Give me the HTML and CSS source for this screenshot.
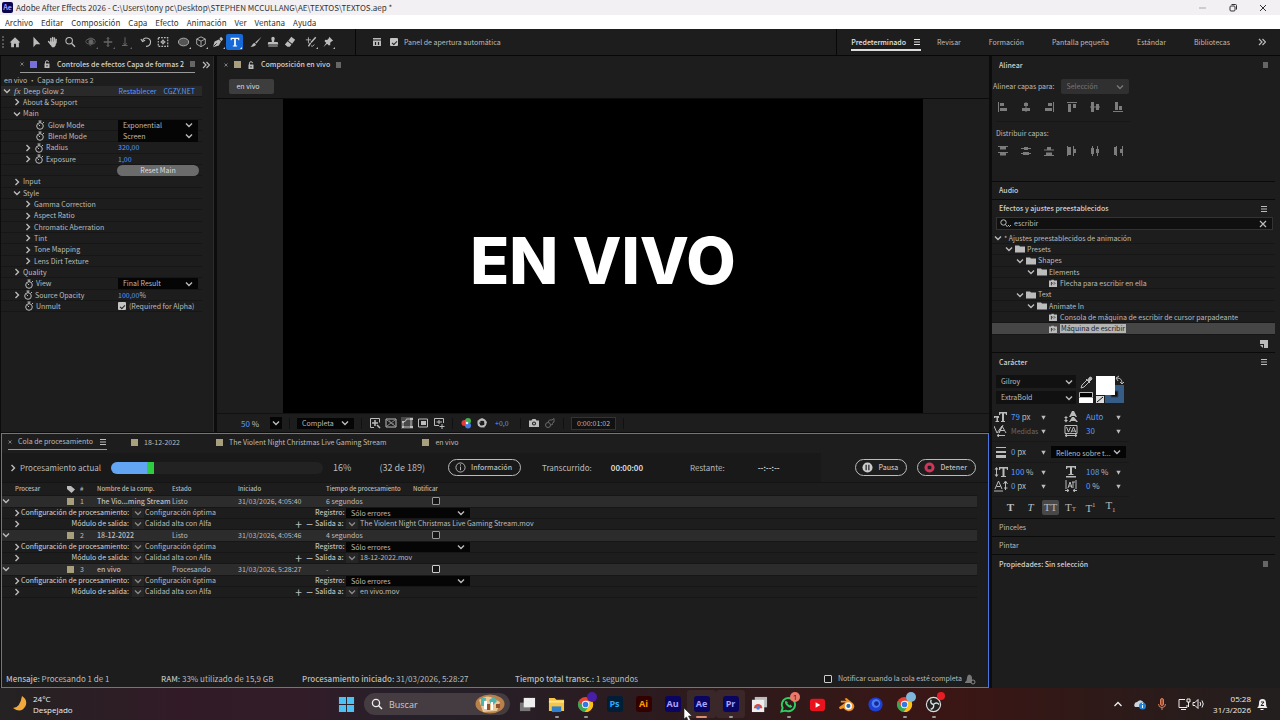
FILE: index.html
```
<!DOCTYPE html>
<html lang="es">
<head>
  <meta charset="UTF-8">
  <meta name="viewport" content="width=device-width, initial-scale=1.0">
  <title>Adobe After Effects 2026</title>
  <link rel="stylesheet" href="styles.css">
</head>
<body>
  <svg class="defs" width="0" height="0" aria-hidden="true">
    <symbol id="down" viewBox="0 0 8 8"><path d="M1 2.5 4 5.5 7 2.5" fill="none" stroke="currentColor" stroke-width="1.4"/></symbol>
    <symbol id="right" viewBox="0 0 8 8"><path d="M2.5 1 5.5 4 2.5 7" fill="none" stroke="currentColor" stroke-width="1.4"/></symbol>
    <symbol id="tri" viewBox="0 0 8 8"><path d="M1.5 2h5L4 6.500z" fill="currentColor"/></symbol>
    <symbol id="menu" viewBox="0 0 8 8"><path d="M1 1.500h6M1 4h6M1 6.500h6" stroke="currentColor" stroke-width="1"/></symbol>
    <symbol id="more" viewBox="0 0 8 8"><path d="M1 1 4 4 1 7M4.500 1l3 3-3 3" fill="none" stroke="currentColor" stroke-width="1.200"/></symbol>
    <symbol id="close" viewBox="0 0 8 8"><path d="M1 1l6 6M7 1 1 7" stroke="currentColor" stroke-width="1.200"/></symbol>
    <symbol id="lock" viewBox="0 0 8 8"><path d="M2.500 4V2.200a1.500 1.500 0 0 1 3 0" fill="none" stroke="currentColor"/><path d="M1.500 3.500h5V8h-5z" fill="currentColor"/><path d="M4 5v1.500" stroke="#1d1d1d"/></symbol>
    <symbol id="watch" viewBox="0 0 10 10"><circle cx="5" cy="6" r="3.300" fill="none" stroke="currentColor"/><path d="M3.500 1h3M5 1v2M5 6 3.500 4.500M8 2l1 1" stroke="currentColor" fill="none"/></symbol>
    <symbol id="folder" viewBox="0 0 10 8"><path d="M0 .5h4l1 1h5v6H0z" fill="currentColor"/></symbol>
    <symbol id="preset" viewBox="0 0 10 10"><path d="M0 2h3V1h3v1h4v8H0z" fill="currentColor"/><path d="M3 8V4l2 2M6 4l1.500 1.500L6 7" stroke="#1d1d1d" fill="none"/></symbol>
    <symbol id="search" viewBox="0 0 12 12"><circle cx="5" cy="5" r="3.600" fill="none" stroke="currentColor" stroke-width="1.300"/><path d="M7.500 7.500 11 11" stroke="currentColor" stroke-width="1.500"/></symbol>
    <symbol id="find" viewBox="0 0 12 10"><circle cx="3.500" cy="3.500" r="2.700" fill="none" stroke="currentColor"/><path d="m5.500 5.500 2 2.500M8 6l1.500 1.500L11 6" fill="none" stroke="currentColor"/></symbol>
    <symbol id="chrome" viewBox="0 0 18 18"><circle cx="9" cy="9" r="8" fill="#ea4335"/><path d="M2.100 5A8 8 0 0 0 8 16.900L12.500 11 5.500 11z" fill="#34a853"/><path d="M8 16.900A8 8 0 0 0 16 5H9l3.500 6z" fill="#fbc116"/><circle cx="9" cy="9" r="3.900" fill="#fff"/><circle cx="9" cy="9" r="3" fill="#3478e5"/></symbol>
  </svg>

  <header class="titlebar">
    <span class="app-badge">Ae</span>
    <span class="title">Adobe After Effects 2026 - C:\Users\tony pc\Desktop\STEPHEN MCCULLANG\AE\TEXTOS\TEXTOS.aep *</span>
    <div class="window-buttons">
      <button aria-label="Minimizar"><svg viewBox="0 0 10 10"><path d="M1 5h7" stroke="#aaa"/></svg></button>
      <button aria-label="Restaurar"><svg viewBox="0 0 10 10" fill="none" stroke="#333"><rect x="2" y="3" width="5" height="5" rx="1"/><path d="M3.500 1.500h4q1 0 1 1v4"/></svg></button>
      <button aria-label="Cerrar"><svg viewBox="0 0 10 10"><path d="M2 2l6 6M8 2 2 8" stroke="#333"/></svg></button>
    </div>
  </header>

  <nav class="menubar">
    <button>Archivo</button><button>Editar</button><button>Composición</button><button>Capa</button><button>Efecto</button><button>Animación</button><button>Ver</button><button>Ventana</button><button>Ayuda</button>
  </nav>

  <div class="toolbar">
    <span class="grip"></span>
    <div class="tools">
      <div class="tool-group">
        <button aria-label="Inicio"><svg viewBox="0 0 14 14"><path d="M7 1.500.8 7.500h1.700V13h3.300V9h2.400v4h3.300V7.500h1.700z" fill="currentColor"/></svg></button>
      </div>
      <div class="tool-group">
        <button aria-label="Selección"><svg viewBox="0 0 14 14"><path d="M4 1v12l3-3.500h5z" fill="currentColor"/></svg></button>
        <button aria-label="Mano"><svg viewBox="0 0 14 14" fill="none" stroke="currentColor" stroke-linecap="round"><path d="M4.500 3v5M6.600 1.800v5M8.700 2.200V8M10.700 4l-.4 4M1.800 6.500 4 9" stroke-width="1.700"/><path d="M4 6.500h7l-1 4.500-1.500 2H6L3.500 9.500z" fill="currentColor" stroke="none"/></svg></button>
        <button aria-label="Zoom"><svg viewBox="0 0 14 14" fill="none" stroke="currentColor"><circle cx="6" cy="5.500" r="3.800" stroke-width="1.200"/><path d="m8.800 8.500 4 4" stroke-width="1.600"/></svg></button>
      </div>
      <div class="tool-group dim">
        <button class="sub" aria-label="Órbita"><svg viewBox="0 0 14 14" fill="none" stroke="currentColor"><ellipse cx="6.500" cy="6.500" rx="5.500" ry="3"/><circle cx="7" cy="7" r="2.500" fill="currentColor"/><path d="M3 4.500C5 1.500 9 2 11 4.500M5 10l2 2"/></svg></button>
        <button class="sub" aria-label="Desplazar"><svg viewBox="0 0 14 14" fill="none" stroke="currentColor"><path d="M7 2v10M2 7h10" stroke-width="1.500"/><path d="m5.500 3.500 1.500-2 1.500 2M5.500 10.500l1.500 2 1.500-2"/></svg></button>
        <button class="sub" aria-label="Acercar"><svg viewBox="0 0 14 14" fill="none" stroke="currentColor"><path d="M7 1.500v9M3.500 11H10" stroke-width="1.200"/><path d="M5 8.500 7 11l2-2.500"/></svg></button>
      </div>
      <div class="tool-group">
        <button aria-label="Rotación"><svg viewBox="0 0 14 14" fill="none" stroke="currentColor"><path d="M3 5.500A4.800 4.800 0 1 1 7 12" stroke-width="1.300"/><path d="M1 3.500 3 6.500l3-1.500" stroke-width="1.300"/></svg></button>
        <button aria-label="Punto de ancla"><svg viewBox="0 0 14 14" fill="none" stroke="currentColor"><rect x="1.500" y="2" width="11" height="10" stroke-dasharray="2 1.300" stroke-width="1.400"/><circle cx="7" cy="7" r="1.800"/><path d="M7 4v6M4 7h6"/></svg></button>
      </div>
      <div class="tool-group">
        <button class="sub" aria-label="Elipse"><svg viewBox="0 0 14 14"><ellipse cx="6.500" cy="7" rx="6" ry="4.500" fill="#555" stroke="currentColor"/></svg></button>
        <button class="sub" aria-label="Cubo"><svg viewBox="0 0 14 14" fill="none" stroke="currentColor"><path d="M7 1 12 3.500v6L7 12.500 2 9.500v-6zM2 3.500 7 6l5-2.500M7 6v6.500"/></svg></button>
        <button class="sub" aria-label="Pluma"><svg viewBox="0 0 14 14"><path d="M1 13 3 6.500 8 4l2.500 2.500L8 11zM8.500 3.500l2-2.500L13 3.500l-2 2.500z" fill="currentColor"/><path d="m1.500 12.500 4-4" stroke="#1d1d1d"/></svg></button>
        <button class="sub active" aria-label="Texto"><svg viewBox="0 0 14 14"><path d="M2 2h10v3h-1L10.500 3.500H8V11h1.500v1.200h-5V11H6V3.500H3.500L3 5H2z" fill="currentColor"/></svg></button>
      </div>
      <div class="tool-group">
        <button aria-label="Pincel"><svg viewBox="0 0 14 14"><path d="M13.500.8 6 7.500l1.500 1.300zM5.300 8.200l1.600 1.500C6.500 12 4 13 .5 12.500 3 11.500 2.800 8.500 5.300 8.200z" fill="currentColor"/></svg></button>
        <button aria-label="Tampón"><svg viewBox="0 0 14 14"><path d="M5 3a2 2 0 0 1 4 0c0 1-.7 2-.7 4H12q1 0 1 2v.8H1V9q0-2 1-2h3.700C5.700 5 5 4 5 3zM1.500 11h11v1.300h-11z" fill="currentColor"/></svg></button>
        <button aria-label="Borrador"><svg viewBox="0 0 14 14"><path d="M8.500 1 13 4.500 9.500 9 5 5.500zM4.200 6.200 8.700 10l-2 2.500H4L1 10z" fill="currentColor"/></svg></button>
      </div>
      <div class="tool-group">
        <button class="sub" aria-label="Rotobrocha"><svg viewBox="0 0 14 14" fill="none" stroke="currentColor"><path d="M12.500 1.500 7 7.500M6.500 8 4 12" stroke-width="1.700"/><path d="M1 4.500h6M4 1.500v7M7 11.500q2 1.500 4-1.500"/></svg></button>
        <button class="sub" aria-label="Chincheta"><svg viewBox="0 0 14 14"><path d="m8.500 1 4.500 4.500-1.500.5-2 2 .2 2.500L8 11 3 6l.7-1.500L6 4.700l2-2zM5 8l1 1-4.500 4z" fill="currentColor"/></svg></button>
      </div>
    </div>
    <div class="tool-options">
      <svg class="ico10" viewBox="0 0 10 10"><path d="M1 1h8v8H1z" fill="#bbb"/><path d="M1 3h8M3.500 5v3M6.500 5v3" stroke="#1d1d1d" stroke-width="1.200"/></svg>
      <label><input type="checkbox" class="check" checked> Panel de apertura automática</label>
    </div>
    <nav class="workspaces">
      <button class="ws-active">Predeterminado <svg class="ico8"><use href="#menu"/></svg></button>
      <div class="ws-list">
        <button>Revisar</button><button>Formación</button><button>Pantalla pequeña</button><button>Estándar</button><button>Bibliotecas</button><button aria-label="Más"><svg class="ico8"><use href="#more"/></svg></button>
      </div>
    </nav>
  </div>

  <main class="workspace">
    <section class="panel effects">
      <div class="tabs">
        <div class="tab current">
          <svg class="ico4"><use href="#close"/></svg><span class="swatch violet"></span><svg class="ico8"><use href="#lock"/></svg>
          <b>Controles de efectos Capa de formas 2</b><span class="blank"></span>
        </div>
        <svg class="ico8 overflow"><use href="#more"/></svg>
      </div>
      <p class="layer-name">en vivo • Capa de formas 2</p>
      <div class="props rows">
        <div class="prop head"><svg class="ico8"><use href="#down"/></svg><i>fx</i><span class="name">Deep Glow 2</span><a href="#">Restablecer</a><a href="#">CGZY.NET</a></div>
        <div class="prop l1"><svg class="ico8"><use href="#right"/></svg><span>About &amp; Support</span></div>
        <div class="prop l1"><svg class="ico8"><use href="#down"/></svg><span>Main</span></div>
        <div class="prop l3"><svg class="ico10"><use href="#watch"/></svg><label class="name" for="glow">Glow Mode</label><div class="value select"><select id="glow"><option>Exponential</option></select><svg><use href="#down"/></svg></div></div>
        <div class="prop l3"><svg class="ico10"><use href="#watch"/></svg><label class="name" for="blend">Blend Mode</label><div class="value select"><select id="blend"><option>Screen</option></select><svg><use href="#down"/></svg></div></div>
        <div class="prop l2"><svg class="ico8"><use href="#right"/></svg><svg class="ico10"><use href="#watch"/></svg><span class="name">Radius</span><span class="value num">320,00</span></div>
        <div class="prop l2"><svg class="ico8"><use href="#right"/></svg><svg class="ico10"><use href="#watch"/></svg><span class="name">Exposure</span><span class="value num">1,00</span></div>
        <div class="prop l3"><span class="name"></span><button class="value reset">Reset Main</button></div>
        <div class="prop l1"><svg class="ico8"><use href="#right"/></svg><span>Input</span></div>
        <div class="prop l1"><svg class="ico8"><use href="#down"/></svg><span>Style</span></div>
        <div class="prop l2"><svg class="ico8"><use href="#right"/></svg><span>Gamma Correction</span></div>
        <div class="prop l2"><svg class="ico8"><use href="#right"/></svg><span>Aspect Ratio</span></div>
        <div class="prop l2"><svg class="ico8"><use href="#right"/></svg><span>Chromatic Aberration</span></div>
        <div class="prop l2"><svg class="ico8"><use href="#right"/></svg><span>Tint</span></div>
        <div class="prop l2"><svg class="ico8"><use href="#right"/></svg><span>Tone Mapping</span></div>
        <div class="prop l2"><svg class="ico8"><use href="#right"/></svg><span>Lens Dirt Texture</span></div>
        <div class="prop l1"><svg class="ico8"><use href="#right"/></svg><span>Quality</span></div>
        <div class="prop l2"><svg class="ico10"><use href="#watch"/></svg><label class="name" for="view">View</label><div class="value select"><select id="view"><option>Final Result</option></select><svg><use href="#down"/></svg></div></div>
        <div class="prop l1"><svg class="ico8"><use href="#right"/></svg><svg class="ico10"><use href="#watch"/></svg><span class="name">Source Opacity</span><span class="value"><span class="num">100,00</span>%</span></div>
        <div class="prop l2"><svg class="ico10"><use href="#watch"/></svg><span class="name">Unmult</span><label class="value"><input type="checkbox" class="check" checked> (Required for Alpha)</label></div>
      </div>
    </section>

    <section class="panel comp">
      <div class="tabs">
        <div class="tab">
          <svg class="ico4"><use href="#close"/></svg><span class="swatch"></span><svg class="ico8"><use href="#lock"/></svg>
          <b>Composición en vivo</b><span class="blank"></span>
        </div>
      </div>
      <div class="flow"><button>en vivo</button></div>
      <div class="viewer"><div class="canvas">EN VIVO</div></div>
      <div class="comp-bar">
        <span class="zoom"><span class="num">50</span> %</span>
        <button class="dark" aria-label="Aumento"><svg class="ico8"><use href="#down"/></svg></button>
        <span class="sep"></span>
        <div class="select res"><select aria-label="Resolución"><option>Completa</option></select><svg><use href="#down"/></svg></div>
        <span class="sep"></span>
        <div class="view-icons">
          <svg viewBox="0 0 12 12" fill="none" stroke="currentColor"><path d="M5 10.500H1.500v-9h9v4"/><path d="M6 3v6M3 6h6M8 8l3 3" stroke-width="1.500"/></svg>
          <svg viewBox="0 0 12 12" fill="none" stroke="currentColor"><path d="M1 2h10v8H1z"/><path d="m2 3 8 6M10 3 2 9M4 4h1v1M7 7h2" stroke="#888"/></svg>
          <svg class="on" viewBox="0 0 12 12" fill="none" stroke="currentColor"><path d="M2 10V5q3 0 3.500-3H10v8z"/><path d="M1 5h2M9 2h3M1 10h2M9 10h3" stroke-width="2"/></svg>
          <svg viewBox="0 0 12 12"><path d="M1.500 2h9v8h-9z" fill="none" stroke="currentColor"/><path d="M4 4h5v4H4z" fill="currentColor"/></svg>
          <svg viewBox="0 0 12 12" fill="none" stroke="currentColor"><path d="M6 8.500H1.500v-7h9V6"/><path d="M6 3v4M3.500 5H9M9 7v5M6.500 9.500h5"/></svg>
        </div>
        <span class="sep"></span>
        <div class="view-icons">
          <svg viewBox="0 0 12 12"><circle cx="4.500" cy="6" r="3" fill="#e13b3b"/><circle cx="8" cy="4" r="3" fill="#42b14a"/><circle cx="8" cy="8.500" r="3" fill="#4a78e0"/><circle cx="7" cy="6" r="1.300" fill="#eee"/></svg>
          <svg viewBox="0 0 12 12" fill="none" stroke="currentColor"><circle cx="6" cy="6" r="3.600" stroke-width="2"/><path d="M6 1v3M11 5 8 6M8 10.500 7 8M2 9l2-2M1.500 4l3 1"/></svg>
        </div>
        <span class="num exposure">+0,0</span>
        <span class="sep"></span>
        <div class="view-icons">
          <svg viewBox="0 0 12 12"><path d="M1 3.500h2.500L4.500 2h3l1 1.500H11V10H1z" fill="currentColor"/><circle cx="6" cy="6.500" r="2" fill="#1d1d1d"/><circle cx="6" cy="6.500" r="1" fill="currentColor"/></svg>
          <svg class="faint" viewBox="0 0 12 12" fill="none" stroke="currentColor"><circle cx="4" cy="8" r="2.500"/><path d="M4 5q1-3 4-2l2-1.500V5L8 6.500M7 8l2-1"/></svg>
        </div>
        <span class="sep"></span>
        <span class="timecode">0:00:01:02</span>
        <span class="sep"></span>
      </div>
    </section>

    <section class="panel queue">
      <div class="queue-tabs">
        <div class="tab current"><svg class="ico4"><use href="#close"/></svg><span>Cola de procesamiento</span><svg class="ico8"><use href="#menu"/></svg></div>
        <div class="tab"><span class="swatch"></span><span>18-12-2022</span></div>
        <div class="tab"><span class="swatch"></span><span>The Violent Night Christmas Live Gaming Stream</span></div>
        <div class="tab"><span class="swatch"></span><span>en vivo</span></div>
      </div>
      <div class="progress-row">
        <div class="progress-info">
          <svg class="ico8"><use href="#right"/></svg>
          <span class="now">Procesamiento actual</span>
          <div class="bar"><span class="done" style="width: 17%"></span><span class="frame" style="width: 3%"></span></div>
          <span class="percent">16%</span>
          <span class="count">(32 de 189)</span>
          <button class="pill"><svg viewBox="0 0 12 12" fill="none" stroke="currentColor"><circle cx="6" cy="6" r="5"/><path d="M6 5v4M6 2.500V4"/></svg>Información</button>
          <span class="elapsed">Transcurrido:</span>
          <b class="time">00:00:00</b>
          <span class="left">Restante:</span>
          <b>--:--:--</b>
        </div>
        <button class="pill"><svg viewBox="0 0 12 12"><circle cx="6" cy="6" r="5.500" fill="#ccc"/><path d="M4.500 3v6M7.500 3v6" stroke="#1d1d1d" stroke-width="1.300"/></svg>Pausa</button>
        <button class="pill"><svg viewBox="0 0 12 12"><circle cx="6" cy="6" r="5.500" fill="#d0365a"/><rect x="4" y="4" width="4" height="4" rx="1" fill="#1d1d1d"/></svg>Detener</button>
      </div>
      <table>
        <colgroup><col class="c-proc"><col class="c-tag"><col class="c-num"><col class="c-name"><col class="c-state"><col class="c-start"><col class="c-time"><col class="c-notify"><col></colgroup>
        <thead>
          <tr><th class="proc">Procesar</th><th><svg class="ico8" viewBox="0 0 8 8"><path d="M0 1h4l4 3.500L4.500 8 0 4z" fill="#bbb"/></svg></th><th>#</th><th>Nombre de la comp.</th><th>Estado</th><th>Iniciado</th><th>Tiempo de procesamiento</th><th>Notificar</th><th></th></tr>
        </thead>
        <tbody>
          <tr class="item"><td><svg class="ico8"><use href="#down"/></svg></td><td><span class="swatch"></span></td><td>1</td><td><b>The Vio...ming Stream</b></td><td>Listo</td><td>31/03/2026, 4:05:40</td><td>6 segundos</td><td><input type="checkbox" class="box" aria-label="Notificar"></td><td></td></tr>
          <tr><td colspan="9"><div class="detail"><svg class="ico8"><use href="#right"/></svg><span class="key">Configuración de procesamiento:</span><button class="drop" aria-label="Plantilla"><svg class="ico8"><use href="#down"/></svg></button><span class="val">Configuración óptima</span><b class="key2">Registro:</b><div class="select log"><select aria-label="Registro"><option>Sólo errores</option></select><svg><use href="#down"/></svg></div></div></td></tr>
          <tr><td colspan="9"><div class="detail"><svg class="ico8"><use href="#right"/></svg><span class="key">Módulo de salida:</span><button class="drop" aria-label="Módulo"><svg class="ico8"><use href="#down"/></svg></button><span class="val module">Calidad alta con Alfa</span><button class="pm">+</button><button class="pm">−</button><b class="key2">Salida a:</b><button class="drop" aria-label="Salida"><svg class="ico8"><use href="#down"/></svg></button><span>The Violent Night Christmas Live Gaming Stream.mov</span></div></td></tr>
        </tbody>
        <tbody>
          <tr class="item"><td><svg class="ico8"><use href="#down"/></svg></td><td><span class="swatch"></span></td><td>2</td><td><b>18-12-2022</b></td><td>Listo</td><td>31/03/2026, 4:05:46</td><td>4 segundos</td><td><input type="checkbox" class="box" aria-label="Notificar"></td><td></td></tr>
          <tr><td colspan="9"><div class="detail"><svg class="ico8"><use href="#right"/></svg><span class="key">Configuración de procesamiento:</span><button class="drop" aria-label="Plantilla"><svg class="ico8"><use href="#down"/></svg></button><span class="val">Configuración óptima</span><b class="key2">Registro:</b><div class="select log"><select aria-label="Registro"><option>Sólo errores</option></select><svg><use href="#down"/></svg></div></div></td></tr>
          <tr><td colspan="9"><div class="detail"><svg class="ico8"><use href="#right"/></svg><span class="key">Módulo de salida:</span><button class="drop" aria-label="Módulo"><svg class="ico8"><use href="#down"/></svg></button><span class="val module">Calidad alta con Alfa</span><button class="pm">+</button><button class="pm">−</button><b class="key2">Salida a:</b><button class="drop" aria-label="Salida"><svg class="ico8"><use href="#down"/></svg></button><span>18-12-2022.mov</span></div></td></tr>
        </tbody>
        <tbody>
          <tr class="item"><td><svg class="ico8"><use href="#down"/></svg></td><td><span class="swatch"></span></td><td>3</td><td><b>en vivo</b></td><td>Procesando</td><td>31/03/2026, 5:28:27</td><td>-</td><td><input type="checkbox" class="box lit" aria-label="Notificar"></td><td></td></tr>
          <tr><td colspan="9"><div class="detail"><svg class="ico8"><use href="#right"/></svg><span class="key">Configuración de procesamiento:</span><button class="drop" aria-label="Plantilla"><svg class="ico8"><use href="#down"/></svg></button><span class="val">Configuración óptima</span><b class="key2">Registro:</b><div class="select log"><select aria-label="Registro"><option>Sólo errores</option></select><svg><use href="#down"/></svg></div></div></td></tr>
          <tr><td colspan="9"><div class="detail"><svg class="ico8"><use href="#right"/></svg><span class="key">Módulo de salida:</span><button class="drop" aria-label="Módulo"><svg class="ico8"><use href="#down"/></svg></button><span class="val module">Calidad alta con Alfa</span><button class="pm">+</button><button class="pm">−</button><b class="key2">Salida a:</b><button class="drop" aria-label="Salida"><svg class="ico8"><use href="#down"/></svg></button><span>en vivo.mov</span></div></td></tr>
        </tbody>
      </table>
      <footer class="status">
        <span class="s-msg"><b>Mensaje:</b> Procesando 1 de 1</span>
        <span class="s-ram"><b>RAM:</b> 33% utilizado de 15,9 GB</span>
        <span class="s-start"><b>Procesamiento iniciado:</b> 31/03/2026, 5:28:27</span>
        <span><b>Tiempo total transc.:</b> 1 segundos</span>
        <label><input type="checkbox" class="box lit"> Notificar cuando la cola esté completa</label>
        <svg class="ico12" viewBox="0 0 12 12"><path d="M1 9q2-1 2-4 0-3 2-3.500Q8 2 8 5v2l-1 3H1z" fill="#777"/><circle cx="9" cy="9" r="2" fill="none" stroke="#888"/></svg>
      </footer>
    </section>

    <aside class="side">
      <section class="align">
        <div class="side-head"><b>Alinear</b><span class="blank"></span></div>
        <div class="align-to"><label for="align">Alinear capas para:</label><div class="select gray"><select id="align" disabled><option>Selección</option></select><svg><use href="#down"/></svg></div></div>
        <div class="align-icons">
          <svg viewBox="0 0 12 12"><path d="M1 1h1v10H1zM3 2h4v3H3zM3 7h7v3H3z"/></svg>
          <svg viewBox="0 0 12 12"><path d="M5.500 1h1v10h-1zM4 2h4v3H4zM2 7h8v3H2z"/></svg>
          <svg viewBox="0 0 12 12"><path d="M10 1h1v10h-1zM5 2h4v3H5zM2 7h7v3H2z"/></svg>
          <svg viewBox="0 0 12 12"><path d="M1 1h10v1H1zM2 3h3v8H2zM7 3h3v4H7z"/></svg>
          <svg viewBox="0 0 12 12"><path d="M1 5.500h10v1H1zM2 1h3v10H2zM7 3h3v6H7z"/></svg>
          <svg viewBox="0 0 12 12"><path d="M1 10h10v1H1zM3 1h3v8H3zM7 5h3v4H7z"/></svg>
        </div>
        <p class="dist">Distribuir capas:</p>
        <div class="align-icons">
          <svg viewBox="0 0 12 12"><path d="M1 1h10v1H1zM3 2h6v2.500H3zM1 7h10v1H1zM3 8h6v2.500H3z"/></svg>
          <svg viewBox="0 0 12 12"><path d="M1 3h10v1H1zM4 2h4v3H4zM1 8h10v1H1zM3 7h6v3H3z"/></svg>
          <svg viewBox="0 0 12 12"><path d="M1 4.500h10v1H1zM4 2h4v2.500H4zM1 10h10v1H1zM3 7.500h6V10H3z"/></svg>
          <svg viewBox="0 0 12 12"><path d="M1 1h1v10H1zM2 2h3v8H2zM7 1h1v10H7zM8 4h2v4H8z"/></svg>
          <svg viewBox="0 0 12 12"><path d="M3 1h1v10H3zM2 3h3v6H2zM8 1h1v10H8zM7 4h3v4H7z"/></svg>
          <svg viewBox="0 0 12 12"><path d="M4 1h1v10H4zM2 2h2v8H2zM10 1h1v10h-1zM8 4h2v4H8z"/></svg>
        </div>
      </section>
      <section class="folded"><b>Audio</b></section>
      <section class="presets">
        <div class="side-head"><b>Efectos y ajustes preestablecidos</b><svg class="ico8"><use href="#menu"/></svg></div>
        <div class="search-box"><svg class="glass"><use href="#find"/></svg><input type="text" value="escribir" aria-label="Buscar efectos"><svg class="ico8"><use href="#close"/></svg></div>
        <ul class="tree rows">
          <li><svg class="ico8"><use href="#down"/></svg>* Ajustes preestablecidos de animación</li>
          <li class="t1"><svg class="ico8"><use href="#down"/></svg><svg class="ico10"><use href="#folder"/></svg>Presets</li>
          <li class="t2"><svg class="ico8"><use href="#down"/></svg><svg class="ico10"><use href="#folder"/></svg>Shapes</li>
          <li class="t3"><svg class="ico8"><use href="#down"/></svg><svg class="ico10"><use href="#folder"/></svg>Elements</li>
          <li class="t4"><svg class="ico10"><use href="#preset"/></svg>Flecha para escribir en ella</li>
          <li class="t2"><svg class="ico8"><use href="#down"/></svg><svg class="ico10"><use href="#folder"/></svg>Text</li>
          <li class="t3"><svg class="ico8"><use href="#down"/></svg><svg class="ico10"><use href="#folder"/></svg>Animate In</li>
          <li class="t4"><svg class="ico10"><use href="#preset"/></svg>Consola de máquina de escribir de cursor parpadeante</li>
          <li class="t4 selected"><svg class="ico10"><use href="#preset"/></svg><mark>Máquina de escribir</mark></li>
        </ul>
        <div class="new"><button aria-label="Nuevo"><svg class="ico10" viewBox="0 0 10 10"><path d="M1 1h8v8H5V5H1z" fill="#bbb"/><path d="M1 6h3v3z" fill="#bbb"/></svg></button></div>
      </section>
      <section class="character">
        <div class="side-head"><b>Carácter</b><svg class="ico8"><use href="#menu"/></svg></div>
        <div class="font-row">
          <div class="fonts">
            <div class="select"><select aria-label="Fuente"><option>Gilroy</option></select><svg><use href="#down"/></svg></div>
            <div class="select"><select aria-label="Estilo"><option>ExtraBold</option></select><svg><use href="#down"/></svg></div>
          </div>
          <svg class="colors" viewBox="0 0 50 30"><path d="m4 13 1-3 5-5 2 2-5 5z" fill="none" stroke="#bbb"/><path d="m9 4 4 4M10.500 5l2.500-3q2 0 2 2l-3 3z" stroke="#bbb" fill="#bbb"/><path d="M2.500 17.500h13v5h-13z" fill="#000" stroke="#bbb"/><path d="M2 23h14v5H2z" fill="#fff"/><path d="M28 10h19v18H28z" fill="#355d86"/><path d="M34 16h7v6h-7z" fill="#111" stroke="#28425e"/><path d="M19 1h19v19H19z" fill="#fff"/><path d="M19 21h8v7h-8z" fill="#ddd"/><path d="m20 27 6-5" stroke="#111"/><path d="M40 3q5 0 5 5M42 1l-3 2 2 3M43 7l2 2 2-2" fill="none" stroke="#bbb"/></svg>
        </div>
        <div class="metrics">
          <svg viewBox="0 0 14 12"><path d="M5 1h8v3h-1l-.5-1.500H10V10h1v1H7v-1h1V2.500H6.500L6 4H5zM0 5h5v2H4v3h1v1H1.500v-1h1V6.500H1V7H0z"/></svg><span><em>79</em> px</span><svg class="tri"><use href="#tri"/></svg>
          <svg viewBox="0 0 14 12"><path d="M8 0h2l3 6h-1.500L11 5H7.500L7 6H5zM5 11l3-5h2l4 5h-2l-.6-1H7l-.6 1zM2 5l2 2H2.600v2H4l-2 2.500L0 9h1.400V7H0z"/></svg><span><em>Auto</em></span><svg class="tri"><use href="#tri"/></svg>
          <svg viewBox="0 0 14 12" fill="none" stroke="#bbb"><path d="m0 1 3 7 5-7M5 8l3-7 4 7M6 5.500h4M9 0 5 8M3 10.500h8M5 9l-2 1.500L5 12"/></svg><span class="faint">Medidas</span><svg class="tri"><use href="#tri"/></svg>
          <svg viewBox="0 0 14 12" fill="none" stroke="#bbb"><path d="M1 .5h12v8H1z"/><path d="m2.500 2 2 5 2-5M7 7.500 9.500 2 12 7.500M8 6h3M1 10.500h12M3 9l-2 1.500L3 12M11 9l2 1.500-2 1.500"/></svg><span><em>30</em></span><svg class="tri"><use href="#tri"/></svg>
        </div>
        <div class="stroke-row">
          <svg viewBox="0 0 14 12"><path d="M2 1h10v1H2zM2 5h10v2H2zM2 9h10v3H2z"/></svg><span><em>0</em> px</span><svg class="tri"><use href="#tri"/></svg>
          <div class="select"><select aria-label="Relleno"><option>Relleno sobre t...</option></select><svg><use href="#down"/></svg></div>
        </div>
        <div class="metrics">
          <svg viewBox="0 0 14 12"><path d="M5 1h9v3h-1l-.5-1.500H10.500V10h1.500v1H7v-1h1.500V2.500H6.500L6 4H5zM2.500 1l2 2.500H3v5h1.500l-2 2.500-2-2.500H2v-5H.5z"/></svg><span><em>100</em> %</span><svg class="tri"><use href="#tri"/></svg>
          <svg viewBox="0 0 14 12"><path d="M2 0h10v3h-1l-.5-1.500H8V8h1.500v1h-5V8H6V1.500H3.500L3 3H2zM2 10h10v1.500H2z"/></svg><span><em>108</em> %</span><svg class="tri"><use href="#tri"/></svg>
          <svg viewBox="0 0 14 12" fill="none" stroke="#bbb"><path d="m1 9 3.500-8L8 9M2.500 6.500h4M0 11h9M11.500 2v8M9.500 4l2-3 2 3M10 8h3.500"/></svg><span><em>0</em> px</span><svg class="tri"><use href="#tri"/></svg>
          <svg viewBox="0 0 14 12" fill="none" stroke="#bbb"><path d="M2 0v9M12 0v9M4 8l2-6 2 6M5 6h3M8 2h3M9 2v6M1 10.500h4M9 10.500h4M3 9l2 1.500L3 12M11 9l-2 1.500 2 1.500"/></svg><span><em>0</em> %</span><svg class="tri"><use href="#tri"/></svg>
        </div>
        <div class="caps">
          <button><b>T</b></button><button><i>T</i></button><button class="on">TT</button><button>T<small>T</small></button><button>T<sup>1</sup></button><button>T<sub>1</sub></button>
        </div>
      </section>
      <section class="folded">Pinceles</section>
      <section class="folded">Pintar</section>
      <section class="folded last"><b>Propiedades: Sin selección</b><span class="blank"></span></section>
    </aside>
  </main>

  <footer class="taskbar">
    <div class="weather">
      <svg viewBox="0 0 18 18"><path d="M11 1q6 4 3.500 10Q10 19 2 13q7 0 9-12z" fill="#f2a93b"/></svg>
      <p>24°C<br>Despejado</p>
    </div>
    <div class="apps">
      <button class="app" aria-label="Inicio"><svg viewBox="0 0 18 18" fill="#4cc2f4"><path d="M1 1h7.500v7.500H1zM9.500 1H17v7.500H9.500zM1 9.500h7.500V17H1zM9.500 9.500H17V17H9.500z"/></svg></button>
      <label class="taskbar-search"><svg class="ico12"><use href="#search"/></svg><input type="text" placeholder="Buscar" aria-label="Buscar">
        <svg class="pic" viewBox="0 0 30 20"><ellipse cx="15" cy="10" rx="14.500" ry="9.500" fill="#b98049"/><path d="M4 6q8-6 14-2l7 4-3 9-14 1z" fill="#e8c79a"/><path d="M6 4h5l-1 8H6zM14 6l5-3 3 4-5 5z" fill="#4fb3ae"/><path d="M9 7h3v8H9zM16 8h2v8h-2z" fill="#fff"/><path d="M12 10h3v6h-3zM21 10h4v4h-4z" fill="#93522f"/></svg>
      </label>
      <button class="app" aria-label="Vista de tareas"><svg viewBox="0 0 18 18"><path d="M1 7h11v9H1z" fill="#777"/><path d="M5 2h12v10H5z" fill="#eee"/></svg></button>
      <button class="app open" aria-label="Explorador"><svg viewBox="0 0 18 18"><path d="M1 2h6l2 2h8v12H1z" fill="#f6c646"/><path d="M1 5h16v2H1z" fill="#ffe28a"/><path d="M4 11h10v6H4z" fill="#2f7fd0"/></svg></button>
      <button class="app open" aria-label="Chrome"><svg><use href="#chrome"/></svg><span class="badge purple"></span></button>
      <button class="app" aria-label="Photoshop"><span class="adobe ps">Ps</span></button>
      <button class="app" aria-label="Illustrator"><span class="adobe ai">Ai</span></button>
      <button class="app" aria-label="Audition"><span class="adobe">Au</span></button>
      <button class="app open focus" aria-label="After Effects"><span class="adobe">Ae</span></button>
      <button class="app open raised" aria-label="Premiere"><span class="adobe">Pr</span></button>
      <button class="app" aria-label="Grabadora"><svg viewBox="0 0 18 18"><path d="M4 1h13v11H4z" fill="#bbb"/><path d="M1 4h13v13H1z" fill="#eee"/><path d="M3 13a4.500 4.500 0 0 1 9 0z" fill="#e1483b"/><circle cx="7.500" cy="12.500" r="2" fill="#4a84e8"/></svg></button>
      <button class="app open" aria-label="WhatsApp"><svg viewBox="0 0 18 18"><path d="m1.500 16.500 1.300-4A7 7 0 1 1 6 15.500z" fill="none" stroke="#2fcf66" stroke-width="2"/><path d="M6 5q-2 2 1.500 5.500T13 11l-2-2-1 1L7.500 7.500l1-1z" fill="#2fcf66"/></svg><span class="badge">1</span></button>
      <button class="app" aria-label="YouTube"><svg viewBox="0 0 18 18"><rect x="1" y="3" width="16" height="13" rx="3" fill="#e8131c"/><path d="M7 6.500v6l5-3z" fill="#fff"/></svg></button>
      <button class="app" aria-label="Blender"><svg viewBox="0 0 18 18"><path d="m1 12 7-5H3V5h6L7 3l2-1 7 6q3 4-1 7-6 3-9-2l-4 1z" fill="#f09428"/><circle cx="11" cy="10.500" r="3.800" fill="#fff"/><circle cx="11" cy="10.500" r="2.200" fill="#2c6aa8"/></svg></button>
      <button class="app" aria-label="Cine"><svg viewBox="0 0 18 18"><circle cx="9" cy="9" r="7.500" fill="#1f3fd0"/><circle cx="9.500" cy="8" r="4.500" fill="#4d7cf5"/><circle cx="10" cy="8" r="2.500" fill="#152a90"/></svg></button>
      <button class="app open" aria-label="Chrome"><svg><use href="#chrome"/></svg><span class="badge sky"></span></button>
      <button class="app open" aria-label="OBS"><svg viewBox="0 0 18 18"><circle cx="9" cy="9" r="7.500" fill="#222" stroke="#ddd" stroke-width="1.200"/><path d="M9 9Q5 8 6.500 4M9 9q3-3 6 0M9 9q1 4-3 5" fill="none" stroke="#ddd" stroke-width="1.500"/></svg><span class="badge red"></span></button>
      <svg class="cursor" viewBox="0 0 10 14"><path d="M1 0v11l2.500-2 2 4 2-1-2-4H9z" fill="#fff" stroke="#222" stroke-width=".6"/></svg>
    </div>
    <div class="tray">
      <svg viewBox="0 0 14 14"><path d="m3.500 9 3.500-3.500L10.500 9" fill="none" stroke="#eee" stroke-width="1.300"/></svg>
      <svg viewBox="0 0 14 14"><path d="M2 10a3 3 0 0 1 2-5q4-4 7 1v4z" fill="#ccd5dd"/><circle cx="9.500" cy="9" r="3.500" fill="#2382d2"/><path d="M9.500 8v3M9.500 6v1" stroke="#fff"/></svg>
      <svg viewBox="0 0 14 14" fill="none" stroke="#d9805e"><rect x="5.500" y="1.500" width="3" height="7" rx="1.500" fill="#a54b30"/><path d="M3.500 7q0 3.500 3.500 3.500T10.500 7M7 10.500V13"/></svg>
      <div class="net">
        <svg viewBox="0 0 14 14" fill="none" stroke="#eee"><path d="M8 2.500H2v8h8V8M4 12.500h5M10 2h3v3h-3zM11.500 5v5"/></svg>
        <svg viewBox="0 0 14 14" fill="none" stroke="#eee"><path d="M2 5.500h2l3-3v9l-3-3H2zM9 5q1.500 2 0 4M11 3.500q2.500 3.500 0 7"/></svg>
      </div>
      <p>05:28<br>31/3/2026</p>
      <svg viewBox="0 0 14 14"><path d="M2 11q2-1 2-5 0-4 3.500-4T11 6q0 4 1.500 5zM5.500 12h3v1h-3z" fill="#eee"/><path d="M6 5h3L6 8.500h3" stroke="#2a1c1c" fill="none"/></svg>
    </div>
  </footer>
</body>
</html>
```
FILE: styles.css
```
* {
  box-sizing: border-box;
}

body {
  margin: 0;
  height: 100vh;
  display: flex;
  flex-direction: column;
  overflow: hidden;
  background-color: #0c0c0c;
  color: #bcbcbc;
  font-family: "Noto Sans CJK SC", "Noto Sans", sans-serif;
  font-size: 7px;
  line-height: 11px;
  white-space: nowrap;
}

.defs {
  position: absolute;
}

p, ul {
  margin: 0;
  padding: 0;
  list-style: none;
}

b, th {
  font-weight: 500;
}

button, input, select {
  font: inherit;
  color: inherit;
  margin: 0;
  padding: 0;
  border: none;
  background: none;
}

a, .num, em {
  color: #559bff;
  font-style: normal;
  text-decoration: none;
}

svg {
  flex: none;
  display: block;
}

.ico4 { width: 4px; height: 4px; }
.ico8 { width: 8px; height: 8px; }
.ico10 { width: 10px; height: 10px; }
.ico12 { width: 12px; height: 12px; }

.faint {
  color: #6a6a6a;
}

.swatch {
  flex: none;
  display: block;
  width: 7px;
  height: 7px;
  background-color: #a89f7c;
}

.swatch.violet {
  background-color: #7670dc;
}

.blank {
  width: 5px;
  height: 6px;
  background-color: #666;
}

.check, .box {
  appearance: none;
  flex: none;
  width: 8px;
  height: 8px;
  border-radius: 1px;
}

.check {
  background-color: #c4c4c4;
  display: grid;
  place-items: center;
}

.check::after {
  content: "";
  width: 2px;
  height: 4px;
  border: solid #222;
  border-width: 0 1px 1px 0;
  transform: rotate(45deg);
}

.box {
  border: 1px solid #999;
  background-color: #151515;
}

.box.lit {
  border-color: #ccc;
}

/* dropdowns */
.select {
  display: grid;
  align-items: center;
  background-color: #050505;
}

.select > * {
  grid-area: 1 / 1;
}

.select select {
  appearance: none;
  width: 100%;
  padding: 0 14px 0 5px;
  height: 11px;
}

.select svg {
  justify-self: end;
  width: 8px;
  height: 8px;
  margin-right: 5px;
  pointer-events: none;
}

/* title and menus */
.titlebar {
  display: flex;
  align-items: center;
  height: 15px;
  padding-left: 2px;
  background-color: #f2f0f2;
  color: #333;
  font-size: 8px;
}

.app-badge {
  width: 11px;
  height: 11px;
  margin-right: 3px;
  border-radius: 2px;
  background-color: #0b0650;
  color: #a59cff;
  font-size: 7px;
  font-weight: bold;
  text-align: center;
}

.window-buttons {
  display: flex;
  gap: 20px;
  margin-left: auto;
  padding-right: 12px;
}

.window-buttons svg {
  width: 10px;
  height: 10px;
}

.menubar {
  display: flex;
  gap: 8px;
  height: 14px;
  padding-left: 5px;
  background-color: #fff;
  color: #333;
  font-size: 8px;
}

/* toolbar */
.toolbar {
  display: flex;
  align-items: stretch;
  height: 27px;
  background-color: #1d1d1d;
  border-bottom: 1px solid #080808;
}

.grip {
  width: 2px;
  margin: 7px 2px;
  border-left: 2px dotted #555;
}

.tools, .tool-group {
  display: flex;
  align-items: center;
}

.tools {
  gap: 4px;
  padding-right: 19px;
  border-right: 1px solid #080808;
}

.tool-group button {
  position: relative;
  width: 17px;
  height: 16px;
  display: grid;
  place-items: center;
  border-radius: 2px;
}

.tool-group svg {
  width: 12px;
  height: 12px;
}

.tool-group .sub::after {
  content: "";
  position: absolute;
  right: 1px;
  bottom: 1px;
  border: 1px solid;
  border-color: transparent currentColor currentColor transparent;
}

.tool-group .active {
  background-color: #1769d8;
  color: #fff;
}

.tool-group.dim {
  color: #666;
}

.tool-options, .tool-options label {
  display: flex;
  align-items: center;
  gap: 6px;
}

.tool-options {
  flex: 1;
  gap: 8px;
  padding-left: 16px;
}

.workspaces {
  display: flex;
  align-items: center;
  justify-content: space-between;
  gap: 16px;
  padding: 0 14px;
  border-left: 1px solid #080808;
}

.ws-list {
  display: flex;
  gap: 28px;
}

.ws-active {
  display: flex;
  align-items: center;
  gap: 7px;
  height: 17px;
  border-bottom: 2px solid #ddd;
  padding-top: 2px;
  color: #e4e4e4;
  font-weight: 500;
}

/* panels */
.workspace {
  flex: 1;
  min-height: 0;
  display: grid;
  grid-template-columns: 213px minmax(0, 1fr) 288px;
  grid-template-rows: minmax(0, 376fr) minmax(0, 255fr);
  gap: 1px 3px;
  padding-left: 1px;
}

.panel, .side {
  background-color: #1d1d1d;
  overflow: hidden;
}

.tabs {
  display: flex;
  justify-content: space-between;
  height: 19px;
}

.tab {
  display: flex;
  align-items: center;
  gap: 6px;
}

.tabs .tab {
  height: 17px;
}

.tabs .tab b {
  color: #d2d2d2;
}

.current {
  border-bottom: 1px solid #999;
}

.effects {
  border-right: 1px solid #2c2c2c;
}

.effects .tab {
  margin-left: 19px;
}

.effects .tabs .overflow {
  margin: 5px 3px 0 0;
}

.layer-name {
  padding-left: 3px;
}

.props {
  margin-right: 11px;
}

.rows > * {
  display: flex;
  align-items: center;
  height: 11px;
  border-bottom: 1px solid #161616;
}

.rows > :nth-child(3n) {
  height: 12px;
}

.prop {
  gap: 3px;
  padding-left: 2px;
}

.prop.head {
  background-color: #292929;
}

.prop.head i {
  font-family: "Liberation Serif", serif;
  font-size: 9px;
}

.head .name {
  flex: 1;
}

.head a {
  margin-right: 4px;
}

.head a:last-child {
  margin-right: 7px;
}

.l1 { padding-left: 12px; }
.l2 { padding-left: 23px; }
.l3 { padding-left: 34px; }

.l1, .l2 {
  gap: 2px;
}

.prop .name {
  flex: 1;
}

.prop .value {
  width: 84px;
}

.props .value.select {
  width: 80px;
  margin-right: 4px;
}

.props label.value {
  display: flex;
  align-items: center;
  gap: 3px;
}

.props .reset {
  width: 82px;
  margin-right: 3px;
  border-radius: 6px;
  background-color: #6b6b6b;
  color: #ddd;
  height: 11px;
}

.comp {
  display: flex;
  flex-direction: column;
}

.comp .tab {
  margin-left: 7px;
}

.flow {
  height: 24px;
  padding: 4px 12px;
  border-bottom: 1px solid #0a0a0a;
}

.flow button {
  width: 45px;
  height: 15px;
  padding-right: 7px;
  border-radius: 2px;
  background-color: #3d3d3d;
  color: #ddd;
}

.viewer {
  flex: 1;
  min-height: 0;
  padding: 0 66px;
}

.canvas {
  height: 100%;
  padding-top: 9px;
  display: grid;
  place-items: center;
  background-color: #000;
  color: #fff;
  font-family: Inter, "Open Sans", sans-serif;
  font-size: 64px;
  font-weight: 800;
}

.comp-bar {
  display: flex;
  align-items: center;
  gap: 7px;
  height: 19px;
  padding-left: 24px;
  border-top: 1px solid #111;
}

.zoom {
  width: 22px;
  font-size: 8px;
}

.dark {
  padding: 2px;
  background-color: #050505;
}

.res {
  width: 57px;
}

.sep {
  width: 1px;
  height: 11px;
  background-color: #111;
}

.view-icons {
  display: flex;
  gap: 4px;
}

.view-icons svg {
  width: 12px;
  height: 12px;
}

.view-icons .on {
  background-color: #484848;
}

.exposure {
  width: 18px;
}

.timecode {
  padding: 0 5px;
  border: 1px solid #333;
  background-color: #111;
}

/* render queue */
.queue {
  grid-column: 1 / 3;
  grid-row: 2;
  display: flex;
  flex-direction: column;
  border: 1px solid #4a76e0;
}

.queue-tabs {
  display: flex;
  height: 19px;
  padding-left: 6px;
}

.queue-tabs .tab {
  height: 16px;
}

.queue-tabs .tab + .tab {
  margin-left: 36px;
}

.queue-tabs .current + .tab {
  margin-left: 24px;
}

.progress-row {
  display: flex;
  align-items: center;
  gap: 10px;
  height: 30px;
  padding-right: 12px;
  border-bottom: 1px solid #141414;
  font-size: 8px;
}

.progress-info {
  flex: 1;
  display: flex;
  align-items: center;
  height: 100%;
  margin-right: 24px;
  padding-left: 7px;
  background-color: #191919;
}

.now {
  margin: 0 10px 0 3px;
}

.bar {
  display: flex;
  width: 212px;
  height: 12px;
  margin-right: 10px;
  border-radius: 6px;
  overflow: hidden;
  background-color: #222;
}

.done {
  background-color: #62a5f2;
}

.frame {
  background-color: #2ecc40;
}

.percent, .count {
  font-size: 9px;
}

.percent { margin-right: 28px; }
.count { margin-right: 23px; }
.elapsed { margin: 0 19px 0 21px; }
.time { margin-right: 47px; }
.left { margin-right: 33px; }

.progress-info b {
  color: #eee;
}

.pill {
  display: flex;
  align-items: center;
  gap: 5px;
  height: 17px;
  padding: 0 8px 0 6px;
  border: 1px solid #bbb;
  border-radius: 9px;
  font-size: 7px;
  font-weight: 500;
}

.pill svg {
  width: 11px;
  height: 11px;
}

table {
  table-layout: fixed;
  width: calc(100% - 11px);
  border-collapse: collapse;
}

th, td {
  padding: 0;
  height: 11px;
  text-align: left;
  border-bottom: 1px solid #161616;
}

thead th {
  height: 12px;
  font-size: 6px;
}

th.proc {
  padding-left: 13px;
}

.c-proc { width: 65px; }
.c-tag { width: 13px; }
.c-num { width: 17px; }
.c-name { width: 75px; }
.c-state { width: 66px; }
.c-start { width: 88px; }
.c-time { width: 87px; }
.c-notify { width: 50px; }

td .box {
  display: block;
  margin-left: 19px;
}

.item {
  height: 12px;
  background-color: #2c2c2c;
}

.detail {
  display: flex;
  align-items: center;
  height: 10px;
  padding-left: 11px;
}

.key {
  width: 108px;
  color: #d6d6d6;
  text-align: right;
}

.key2 {
  width: 26px;
  margin-right: 5px;
  text-align: right;
}

.drop {
  display: grid;
  place-items: center;
  width: 12px;
  height: 10px;
  margin: 0 1px 0 3px;
  background-color: #262626;
  color: #888;
}

.key2 + .drop {
  margin: 0 2px 0 0;
}

.val {
  flex: none;
  width: 170px;
}

.val.module {
  width: 148px;
}

.detail .pm {
  width: 11px;
  font-size: 12px;
}

.log {
  width: 124px;
  height: 10px;
}

.status {
  display: flex;
  align-items: center;
  margin-top: auto;
  height: 17px;
  padding: 0 12px 0 4px;
  font-size: 8px;
}

.s-msg { width: 155px; }
.s-ram { width: 141px; }
.s-start { width: 213px; }

.status label {
  display: flex;
  align-items: center;
  gap: 6px;
  margin: 0 2px 0 auto;
  font-size: 7px;
}

/* right column */
.side {
  grid-column: 3;
  grid-row: 1 / 3;
  padding-right: 5px;
}

.side section {
  border-bottom: 1px solid #0a0a0a;
}

.side-head, .folded {
  display: flex;
  align-items: center;
  justify-content: space-between;
  height: 18px;
  padding: 0 7px;
}

.side-head b, .folded b {
  color: #d0d0d0;
}

.align {
  height: 126px;
}

.align-to {
  display: flex;
  align-items: center;
  gap: 7px;
  height: 25px;
  padding-left: 1px;
}

.align-to .select {
  width: 68px;
  height: 15px;
  border-radius: 2px;
  background-color: #303030;
  color: #777;
}

.align-to select:disabled {
  opacity: 1;
  color: #777;
}

.align-icons {
  display: flex;
  gap: 11px;
  padding: 2px 5px 8px;
  fill: #7c7c7c;
}

.align-icons svg {
  width: 12px;
  height: 12px;
}

.dist {
  width: 135px;
  margin: 0 4px;
  padding-top: 6px;
  height: 22px;
  border-top: 1px solid #171717;
}

.presets .side-head {
  height: 17px;
}

.search-box {
  display: flex;
  align-items: center;
  gap: 2px;
  height: 13px;
  margin: 0 2px 3px 4px;
  padding: 0 5px 0 3px;
  border: 1px solid #333;
  background-color: #101010;
}

.search-box input {
  flex: 1;
}

.glass {
  width: 12px;
  height: 10px;
}

.tree li {
  gap: 2px;
  padding-left: 2px;
}

.tree .t1 { padding-left: 13px; }
.tree .t2 { padding-left: 24px; }
.tree .t3 { padding-left: 35px; }
.tree .t4 { padding-left: 56px; }

.tree svg {
  height: 8px;
}

.tree .selected {
  background-color: #464646;
}

mark {
  padding: 0 1px;
  background-color: #b5b5b5;
  color: #222;
  line-height: 9px;
}

.new {
  display: flex;
  justify-content: flex-end;
  padding: 4px 6px 3px;
}

.font-row {
  display: flex;
  gap: 1px;
  padding: 4px 4px 3px;
}

.fonts {
  display: flex;
  flex-direction: column;
  gap: 3px;
}

.fonts .select {
  width: 80px;
  height: 13px;
  background-color: #111;
}

.fonts .select svg {
  margin-right: 3px;
}

.colors {
  width: 50px;
  height: 30px;
}

.metrics, .stroke-row {
  display: grid;
  grid-template-columns: 14px 26px 21px 19px 26px 8px;
  align-items: center;
  gap: 0 3px;
  width: 137px;
  padding: 2px 0 3px 2px;
  border-bottom: 1px solid #181818;
  font-size: 8px;
  line-height: 14px;
}

.stroke-row {
  grid-template-columns: 14px 26px 8px 75px;
  padding: 3px 0 3px 2px;
}

.metrics > svg, .stroke-row > svg {
  width: 14px;
  height: 12px;
}

.metrics > svg:not([fill]), .stroke-row > svg {
  fill: #bbb;
}

.metrics .tri, .stroke-row .tri {
  width: 7px;
  height: 7px;
}

.metrics .faint {
  font-size: 7px;
}

.stroke-row select {
  height: 12px;
  font-size: 7px;
}

.caps {
  display: flex;
  gap: 3px;
  padding: 3px 10px;
  font-family: "Liberation Serif", serif;
}

.caps button {
  width: 17px;
  height: 15px;
  border-radius: 2px;
  font-size: 11px;
}

.caps b {
  font-weight: bold;
}

.caps .on {
  background-color: #484848;
}

.caps small, .caps sup, .caps sub {
  font-size: 7px;
  line-height: 7px;
}

.side .last {
  border: none;
}

/* taskbar */
.taskbar {
  display: grid;
  grid-template-columns: 1fr auto 1fr;
  align-items: center;
  height: 32px;
  padding: 0 11px;
  background: linear-gradient(90deg, #242222, #321b27 14%, #311c28 24%, #25202a 32%, #2d1a1c 55%, #3a1614 75%, #2c1a19 88%, #231f1f);
  color: #eee;
  font-family: "Open Sans", sans-serif;
  font-size: 8px;
}

.weather {
  display: flex;
  align-items: center;
  gap: 4px;
}

.weather svg {
  width: 18px;
  height: 18px;
}

.apps {
  position: relative;
  display: flex;
  align-items: center;
}

.app {
  position: relative;
  display: grid;
  place-items: center;
  width: 29px;
  height: 28px;
  border-radius: 3px;
}

.app svg {
  width: 17px;
  height: 17px;
}

.focus, .raised {
  background-color: rgba(255, 255, 255, 0.06);
}

.open::after {
  content: "";
  position: absolute;
  bottom: 0;
  width: 4px;
  height: 2px;
  border-radius: 1px;
  background-color: #999;
}

.focus::after {
  width: 11px;
  background-color: #e08a78;
}

.adobe {
  width: 16px;
  height: 16px;
  border-radius: 3px;
  background-color: #090560;
  color: #a9a2ff;
  font-size: 9px;
  font-weight: bold;
  line-height: 15px;
}

.adobe.ps {
  background-color: #001e36;
  color: #31a8ff;
}

.adobe.ai {
  background-color: #330000;
  color: #ff9a00;
}

.badge {
  position: absolute;
  top: 2px;
  right: 3px;
  width: 10px;
  height: 10px;
  border-radius: 5px;
  background-color: #ec7a6c;
  color: #222;
  font-size: 8px;
  line-height: 10px;
}

.badge.purple { background-color: #4a1fa8; }
.badge.sky { background-color: #7fb6dc; }
.badge.red { background-color: #e81c24; width: 8px; height: 8px; }

.taskbar-search {
  display: flex;
  align-items: center;
  gap: 6px;
  width: 146px;
  height: 22px;
  margin: 0 3px;
  padding: 0 5px 0 7px;
  border-radius: 11px;
  background-color: #443c40;
  font-size: 9px;
}

.taskbar-search input {
  flex: 1;
  min-width: 0;
}

.taskbar-search input::placeholder {
  color: #ccc;
}

.pic {
  width: 30px;
  height: 20px;
}

.cursor {
  position: absolute;
  left: 57%;
  top: 18px;
  width: 10px;
  height: 14px;
}

.tray {
  display: flex;
  align-items: center;
  justify-content: flex-end;
  gap: 8px;
}

.tray > svg, .net svg {
  width: 14px;
  height: 14px;
}

.net {
  display: flex;
}

.tray p {
  text-align: right;
}

.tray p + svg {
  margin-left: -4px;
}
```
